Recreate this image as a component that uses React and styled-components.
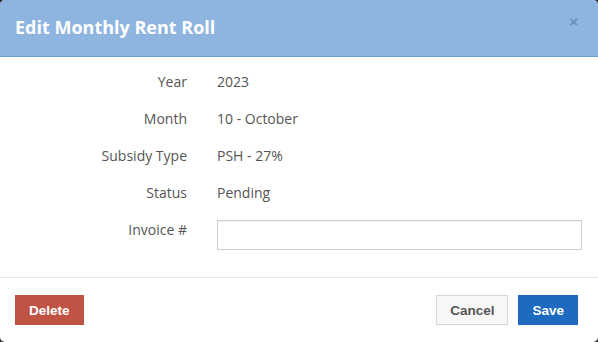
import React from "react";
import styled, { createGlobalStyle } from "styled-components";

const Global = createGlobalStyle`
  html, body {
    margin: 0;
    padding: 0;
    background: #2b2b2b;
  }
  * { box-sizing: border-box; }
`;

const Modal = styled.div`
  width: 598px;
  height: 342px;
  background: #fff;
  border-radius: 5px;
  overflow: hidden;
  display: flex;
  flex-direction: column;
  font-family: "Open Sans", "Liberation Sans", sans-serif;
`;

const Header = styled.div`
  height: 57px;
  background: #8db5e0;
  border-bottom: 1px solid #6b9ad6;
  display: flex;
  align-items: center;
  justify-content: space-between;
  padding: 0 20px 2px 15px;
`;

const Title = styled.h4`
  margin: 0;
  font-size: 18px;
  font-weight: 700;
  color: #fff;
`;

const Close = styled.button`
  border: 0;
  background: none;
  padding: 0;
  margin-top: -12px;
  font-family: "Liberation Sans", sans-serif;
  font-size: 15px;
  font-weight: 700;
  color: #2a4a70;
  opacity: 0.35;
  line-height: 1;
`;

const Body = styled.div`
  padding: 14px 16px 27px 15px;
  display: grid;
  grid-template-columns: 172px 1fr;
  column-gap: 30px;
  row-gap: 15px;
  border-bottom: 1px solid #e5e5e5;
`;

const Label = styled.div`
  text-align: right;
  font-size: 14px;
  line-height: 22px;
  color: #555;
`;

const Value = styled.div`
  font-size: 14px;
  line-height: 22px;
  color: #555;
`;

const Input = styled.input`
  display: block;
  width: 100%;
  height: 30px;
  margin-top: 1px;
  border: 1px solid #cfcfcf;
  box-shadow: inset 0 1px 1px rgba(0, 0, 0, 0.06);
  font-size: 14px;
  padding: 4px 8px;
  outline: none;
`;

const Footer = styled.div`
  flex: 1;
  display: flex;
  align-items: flex-start;
  padding: 17px 20px 0 15px;
  gap: 10px;
`;

const Spacer = styled.div`
  flex: 1;
`;

const Button = styled.button`
  height: 30px;
  padding: 0 13px;
  font-family: "Liberation Sans", Arial, sans-serif;
  font-size: 13.5px;
  font-weight: 700;
  border: 1px solid ${(p) => p.$border};
  background: ${(p) => p.$bg};
  color: ${(p) => p.$color};
  border-radius: 0;
  cursor: pointer;
`;

const rows = [
  ["Year", "2023"],
  ["Month", "10 - October"],
  ["Subsidy Type", "PSH - 27%"],
  ["Status", "Pending"],
];

export default function App() {
  return (
    <>
      <Global />
      <Modal>
        <Header>
          <Title>Edit Monthly Rent Roll</Title>
          <Close aria-label="Close">×</Close>
        </Header>
        <Body>
          {rows.map(([label, value]) => (
            <React.Fragment key={label}>
              <Label>{label}</Label>
              <Value>{value}</Value>
            </React.Fragment>
          ))}
          <Label>Invoice #</Label>
          <div>
            <Input type="text" />
          </div>
        </Body>
        <Footer>
          <Button $bg="#c15345" $border="#c15345" $color="#fff">
            Delete
          </Button>
          <Spacer />
          <Button $bg="#f7f7f7" $border="#d6d6d6" $color="#555">
            Cancel
          </Button>
          <Button $bg="#1d6ac0" $border="#1d6ac0" $color="#fff">
            Save
          </Button>
        </Footer>
      </Modal>
    </>
  );
}
